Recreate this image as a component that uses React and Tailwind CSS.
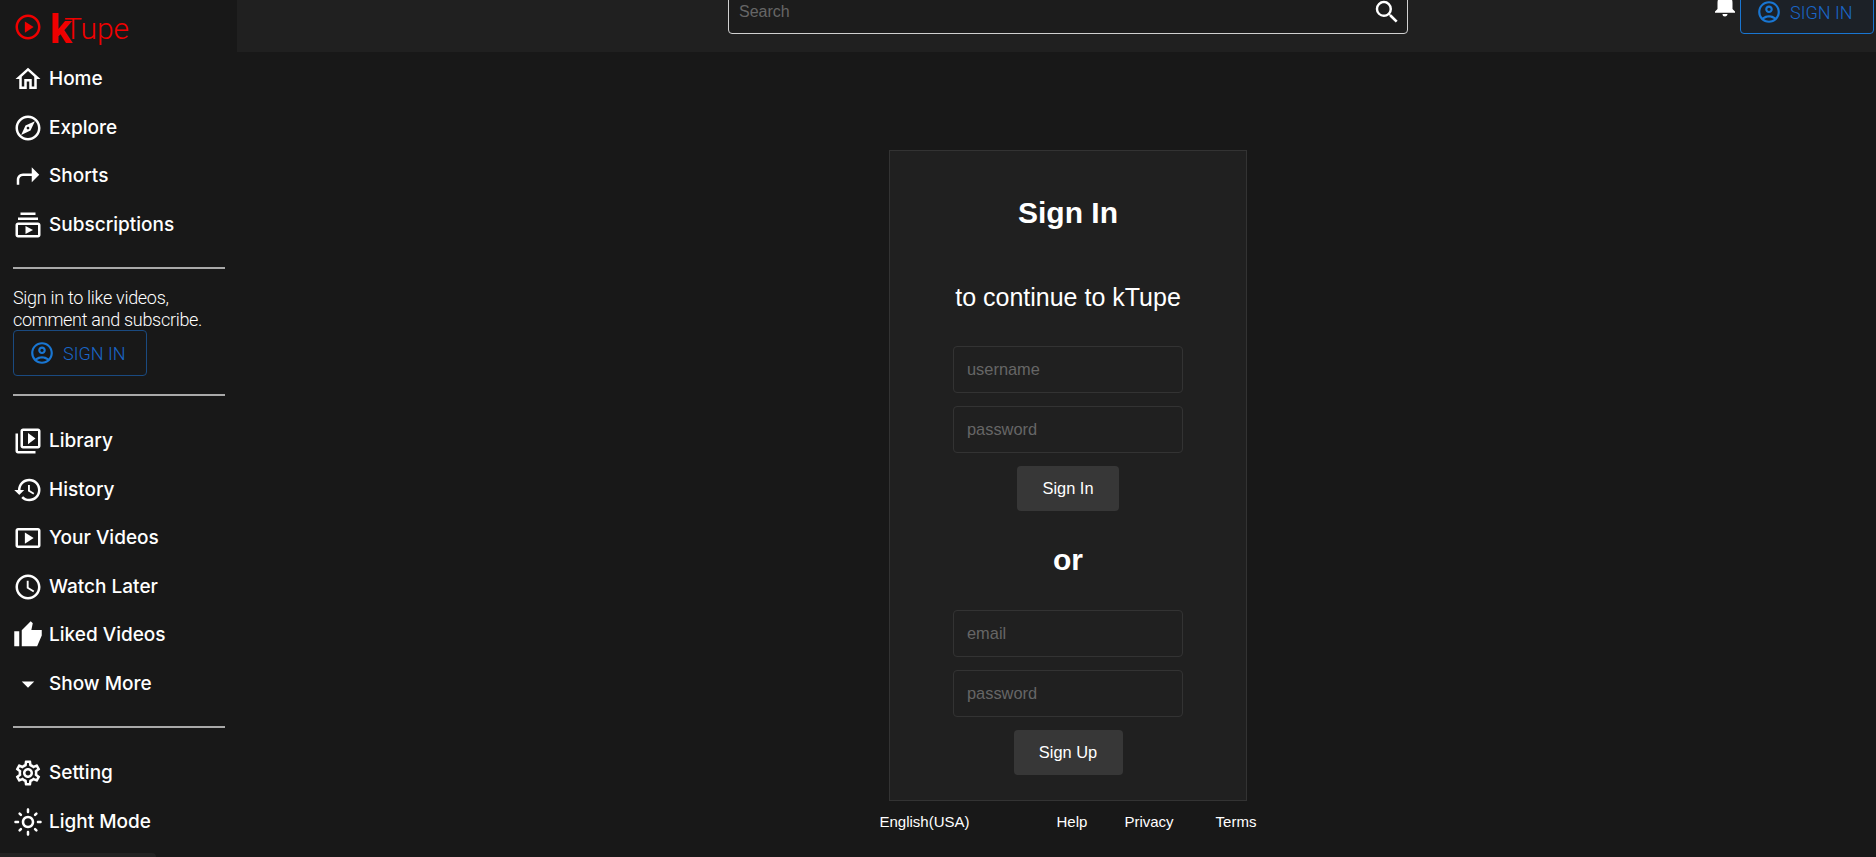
import {
  MdOutlineHome, MdOutlineExplore, MdShortcut, MdOutlineSubscriptions, MdOutlineVideoLibrary,
  MdHistory, MdOutlineSmartDisplay, MdOutlineWatchLater, MdArrowDropDown, MdOutlineSettings,
  MdOutlineLightMode, MdNotifications, MdOutlineAccountCircle, MdOutlinePlayCircle, MdSearch,
} from "react-icons/md";

// the liked icon has square corners, the package only has the rounded one
function ThumbSharp({ className }) {
  return (
    <svg viewBox="0 0 24 24" fill="currentColor" className={className}>
      <path d="M14.17 1 7 8.18V21h12.31L23 12.4V8h-8.31l1.12-5.38z" />
      <path d="M1 9h4v12H1z" />
    </svg>
  );
}

function NavItem({ icon: Icon, label }) {
  return (
    <div className="flex h-[48.5px] items-center pl-[13px]">
      <div className="flex w-[36px] shrink-0">
        <Icon className="size-[30px] text-white" />
      </div>
      <span className="font-['Inter',sans-serif] text-[19px] font-[450] text-white">{label}</span>
    </div>
  );
}

function Divider() {
  return <hr className="mx-[13px] w-[212px] border-t-2 border-[#a9a9a9]" />;
}

function SignInButton({ className = "" }) {
  return (
    <button className={`flex w-[134px] items-center gap-[8px] rounded pl-[15px] font-['Roboto',sans-serif] text-[18px] font-light text-[#1a66c8] ${className}`}>
      <MdOutlineAccountCircle className="size-[26px] text-[#1976d2]" />
      <span>SIGN IN</span>
    </button>
  );
}

function Field({ placeholder }) {
  return (
    <input
      placeholder={placeholder}
      className="block h-[47px] w-[230px] rounded border border-[#333333] bg-transparent px-[13px] text-[16.4px] text-white outline-none placeholder:text-[#666666]"
    />
  );
}

export default function App() {
  return (
    <div className="relative flex h-[857px] overflow-hidden bg-[#181818] font-['Liberation_Sans',sans-serif] text-white">
      <aside className="flex w-[237px] shrink-0 flex-col">
        <div className="flex h-[55px] items-center pb-[1px] pl-[13px] text-[#f00000]">
          <MdOutlinePlayCircle className="size-[30px]" />
          <span className="ml-[7px] -translate-y-[2px] font-['Roboto',sans-serif] text-[30px] leading-none font-light">
            <span className="mr-[-8px] inline-block translate-y-[4px] text-[41px] font-bold">k</span>Tupe
          </span>
        </div>
        <nav>
          <NavItem icon={MdOutlineHome} label="Home" />
          <NavItem icon={MdOutlineExplore} label="Explore" />
          <NavItem icon={MdShortcut} label="Shorts" />
          <NavItem icon={MdOutlineSubscriptions} label="Subscriptions" />
        </nav>
        <div className="mt-[18px]"><Divider /></div>
        <p className="mt-[18px] ml-[13px] font-['Roboto',sans-serif] text-[18px] leading-[21.5px] font-light tracking-[-0.3px]">
          Sign in to like videos,<br />comment and subscribe.
        </p>
        <SignInButton className="ml-[13px] h-[46px] border border-[#1a4a80]" />
        <div className="mt-[18px]"><Divider /></div>
        <nav className="mt-[21px]">
          <NavItem icon={MdOutlineVideoLibrary} label="Library" />
          <NavItem icon={MdHistory} label="History" />
          <NavItem icon={MdOutlineSmartDisplay} label="Your Videos" />
          <NavItem icon={MdOutlineWatchLater} label="Watch Later" />
          <NavItem icon={ThumbSharp} label="Liked Videos" />
          <NavItem icon={MdArrowDropDown} label="Show More" />
        </nav>
        <div className="mt-[18px]"><Divider /></div>
        <nav className="mt-[21px]">
          <NavItem icon={MdOutlineSettings} label="Setting" />
          <NavItem icon={MdOutlineLightMode} label="Light Mode" />
        </nav>
      </aside>

      <div className="flex min-w-0 flex-1 flex-col">
        <header className="flex h-[52px] shrink-0 items-start overflow-hidden bg-[#202020]">
          <div className="-mt-[16px] ml-[491px] flex h-[50px] w-[680px] shrink-0 items-center rounded border border-[#d0d0d0] bg-[#1c1c1c] pr-[5px] pl-[10px]">
            <span className="flex-1 translate-y-[3px] text-[16px] text-[#666666]">Search</span>
            <MdSearch className="size-[30px] translate-y-[3px] text-white" />
          </div>
          <MdNotifications className="-mt-[11px] ml-[302px] size-[30px] shrink-0" />
          <SignInButton className="-mt-[10px] h-[44px] shrink-0 border border-[#1976d2] bg-[#1c2127]" />
        </header>

        <main className="flex flex-1 flex-col items-center pl-[23px]">
          <div className="mt-[98px] flex h-[651px] w-[358px] flex-col items-center border border-[#333333] bg-[#202020]">
            <h1 className="mt-[44px] text-[30px] leading-[36px] font-bold">Sign In</h1>
            <h2 className="mt-[48px] text-[25px] leading-[36px]">to continue to kTupe</h2>
            <div className="mt-[31px] flex flex-col gap-[13px]">
              <Field placeholder="username" />
              <Field placeholder="password" />
            </div>
            <button className="mt-[13px] h-[45px] w-[102px] rounded bg-[#373737] text-[16.4px]">Sign In</button>
            <div className="mt-[31px] text-[30px] leading-[36px] font-bold">or</div>
            <div className="mt-[32px] flex flex-col gap-[13px]">
              <Field placeholder="email" />
              <Field placeholder="password" />
            </div>
            <button className="mt-[13px] h-[45px] w-[109px] rounded bg-[#373737] text-[16.4px]">Sign Up</button>
          </div>
          <footer className="mt-[10px] flex w-[377px] items-center text-[15px]">
            <span>English(USA)</span>
            <span className="ml-[87px]">Help</span>
            <span className="ml-[37px]">Privacy</span>
            <span className="ml-[42px]">Terms</span>
          </footer>
        </main>
      </div>

      <div className="absolute bottom-0 left-0 h-[4px] w-[156px] rounded-tr bg-[#222222]" />
    </div>
  );
}
